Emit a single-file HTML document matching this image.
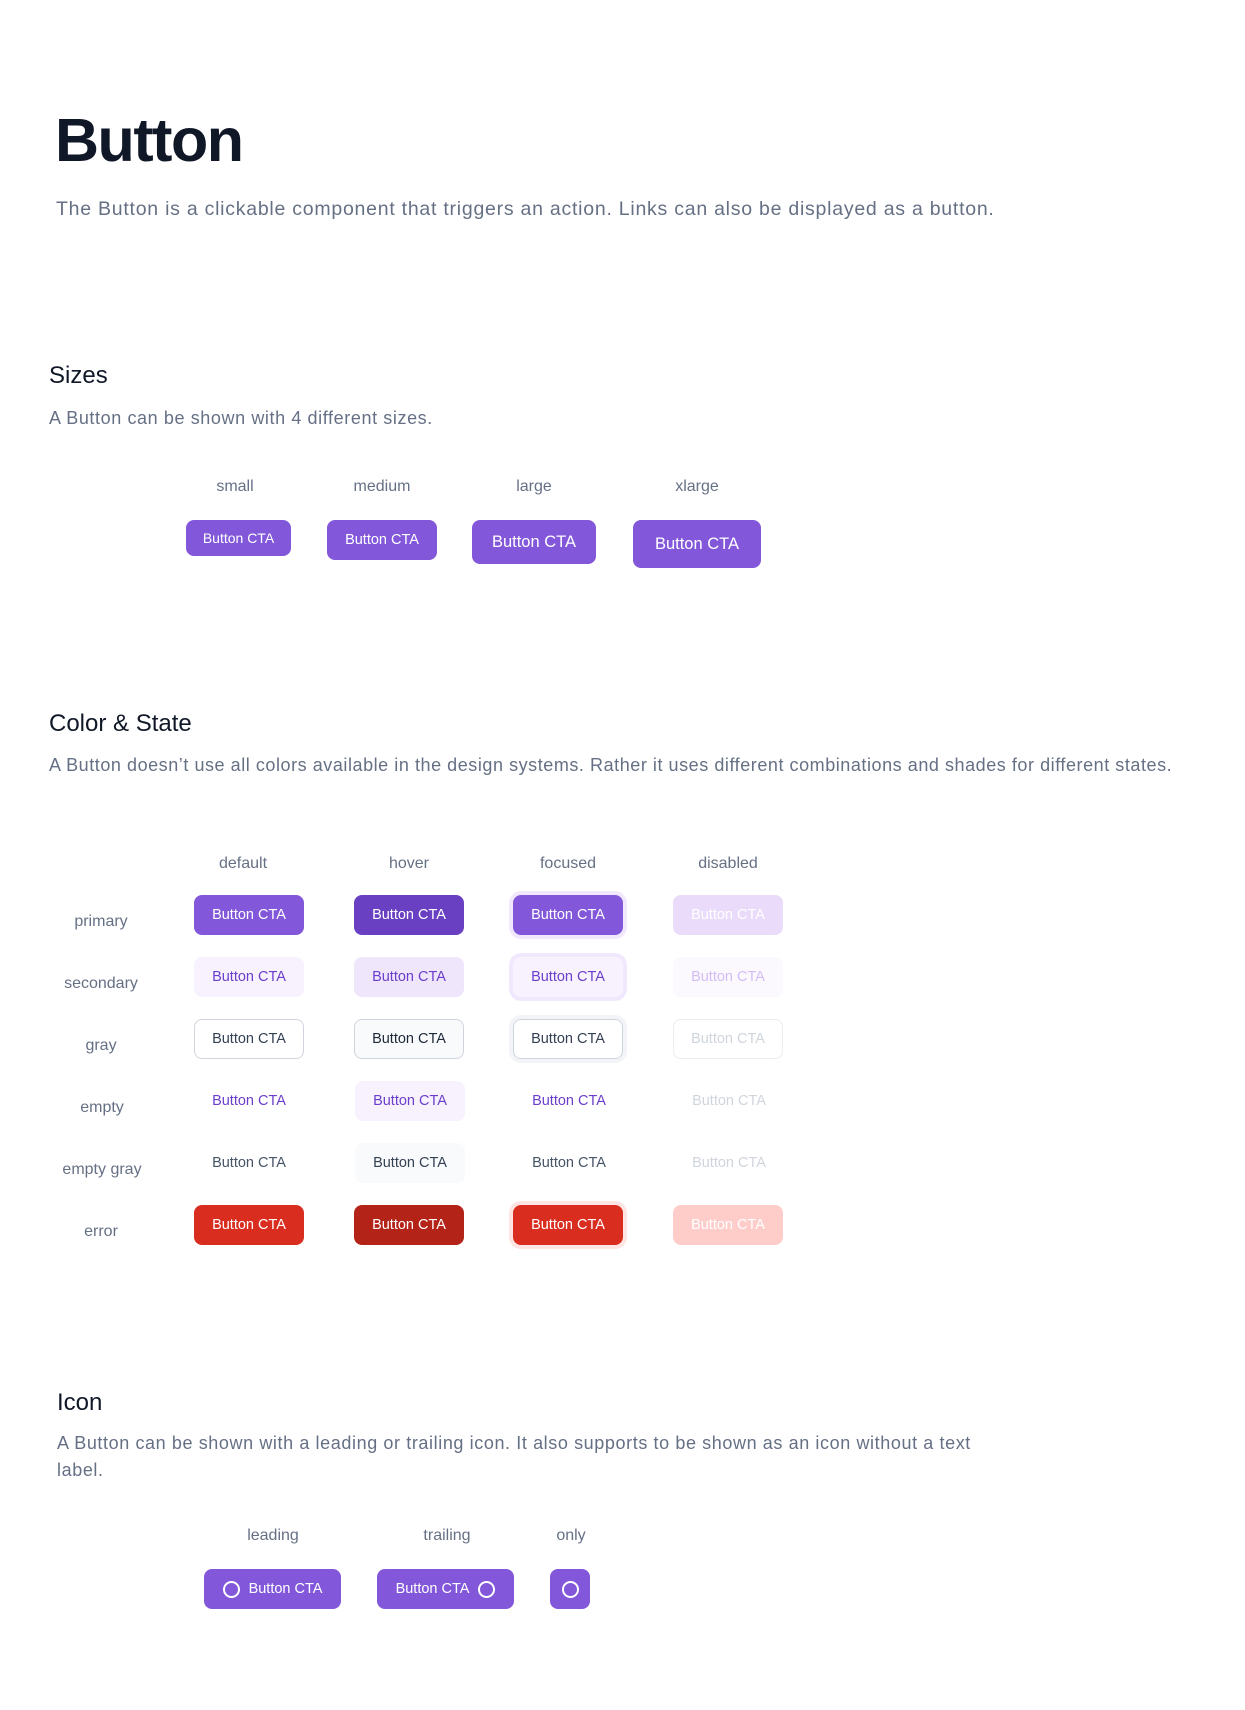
<!DOCTYPE html>
<html><head><meta charset="utf-8"><style>
*{margin:0;padding:0;box-sizing:border-box}
body{width:1245px;height:1710px;background:#fff;font-family:"Liberation Sans",sans-serif;position:relative;overflow:hidden}
.a{position:absolute;white-space:nowrap}
.lbl{color:#667085;font-size:16px;transform:translateX(-50%)}
.b{position:absolute;display:flex;align-items:center;justify-content:center;font-size:14.5px;border-radius:8px;white-space:nowrap;gap:8px}
.p{background:#8257da;color:#fff}
.ph{background:#6a40c3;color:#fff}
.pd{background:#eadbfb;color:#fff}
.s{background:#f7f2fe;color:#6b3fcc}
.sh{background:#f0e6fc;color:#6b3fcc}
.sd{background:#fbf8fe;color:#d4bdf7}
.g{background:#fff;color:#344054;border:1px solid #d0d5dd}
.gh{background:#f9fafb;color:#1d2939;border:1px solid #d0d5dd}
.gd{background:#fff;color:#d0d5dd;border:1px solid #eaecf0}
.e{color:#6b3fcc}
.eh{background:#f7f2fe;color:#6b3fcc}
.ed{color:#d0d5dd}
.eg{color:#475467}
.egh{background:#f9fafb;color:#344054}
.r{background:#d92d20;color:#fff}
.rh{background:#b42318;color:#fff}
.rd{background:#fecdca;color:#fff}
.ic{width:17px;height:17px;border:2px solid #fff;border-radius:50%;display:inline-block}
</style></head><body>
<div class="a" style="left:55px;top:105px;font-size:61px;font-weight:bold;color:#101828;letter-spacing:-1.5px">Button</div>
<div class="a" style="left:56px;top:198px;font-size:19.5px;color:#667085;letter-spacing:0.75px">The Button is a clickable component that triggers an action. Links can also be displayed as a button.</div>

<div class="a" style="left:49px;top:362px;font-size:24px;color:#101828">Sizes</div>
<div class="a" style="left:49px;top:408px;font-size:18px;color:#667085;letter-spacing:0.6px">A Button can be shown with 4 different sizes.</div>
<div class="a lbl" style="left:235px;top:478px">small</div>
<div class="a lbl" style="left:382px;top:478px">medium</div>
<div class="a lbl" style="left:534px;top:478px">large</div>
<div class="a lbl" style="left:697px;top:478px">xlarge</div>
<div class="b p" style="left:186px;top:520px;width:105px;height:36px;font-size:14px">Button CTA</div>
<div class="b p" style="left:327px;top:520px;width:110px;height:40px;font-size:14.5px">Button CTA</div>
<div class="b p" style="left:472px;top:520px;width:124px;height:44px;font-size:16.5px">Button CTA</div>
<div class="b p" style="left:633px;top:520px;width:128px;height:48px;font-size:16.5px">Button CTA</div>

<div class="a" style="left:49px;top:710px;font-size:24px;color:#101828">Color &amp; State</div>
<div class="a" style="left:49px;top:755px;font-size:18px;color:#667085;letter-spacing:0.55px">A Button doesn’t use all colors available in the design systems. Rather it uses different combinations and shades for different states.</div>
<div class="a lbl" style="left:243px;top:855px">default</div>
<div class="a lbl" style="left:409px;top:855px">hover</div>
<div class="a lbl" style="left:568px;top:855px">focused</div>
<div class="a lbl" style="left:728px;top:855px">disabled</div>

<div class="a lbl" style="left:101px;top:913px">primary</div>
<div class="a lbl" style="left:101px;top:975px">secondary</div>
<div class="a lbl" style="left:101px;top:1037px">gray</div>
<div class="a lbl" style="left:102px;top:1099px">empty</div>
<div class="a lbl" style="left:102px;top:1161px">empty gray</div>
<div class="a lbl" style="left:101px;top:1223px">error</div>

<div class="b p" style="left:194px;top:895px;width:110px;height:40px">Button CTA</div>
<div class="b ph" style="left:354px;top:895px;width:110px;height:40px">Button CTA</div>
<div class="b p" style="left:513px;top:895px;width:110px;height:40px;box-shadow:0 0 0 4px #f1e8fd">Button CTA</div>
<div class="b pd" style="left:673px;top:895px;width:110px;height:40px">Button CTA</div>

<div class="b s" style="left:194px;top:957px;width:110px;height:40px">Button CTA</div>
<div class="b sh" style="left:354px;top:957px;width:110px;height:40px">Button CTA</div>
<div class="b s" style="left:513px;top:957px;width:110px;height:40px;box-shadow:0 0 0 4px #f1e8fd">Button CTA</div>
<div class="b sd" style="left:673px;top:957px;width:110px;height:40px">Button CTA</div>

<div class="b g" style="left:194px;top:1019px;width:110px;height:40px">Button CTA</div>
<div class="b gh" style="left:354px;top:1019px;width:110px;height:40px">Button CTA</div>
<div class="b g" style="left:513px;top:1019px;width:110px;height:40px;box-shadow:0 0 0 4px #f2f4f7">Button CTA</div>
<div class="b gd" style="left:673px;top:1019px;width:110px;height:40px">Button CTA</div>

<div class="b e" style="left:194px;top:1081px;width:110px;height:40px">Button CTA</div>
<div class="b eh" style="left:355px;top:1081px;width:110px;height:40px">Button CTA</div>
<div class="b e" style="left:514px;top:1081px;width:110px;height:40px">Button CTA</div>
<div class="b ed" style="left:674px;top:1081px;width:110px;height:40px">Button CTA</div>

<div class="b eg" style="left:194px;top:1143px;width:110px;height:40px">Button CTA</div>
<div class="b egh" style="left:355px;top:1143px;width:110px;height:40px">Button CTA</div>
<div class="b eg" style="left:514px;top:1143px;width:110px;height:40px">Button CTA</div>
<div class="b ed" style="left:674px;top:1143px;width:110px;height:40px">Button CTA</div>

<div class="b r" style="left:194px;top:1205px;width:110px;height:40px">Button CTA</div>
<div class="b rh" style="left:354px;top:1205px;width:110px;height:40px">Button CTA</div>
<div class="b r" style="left:513px;top:1205px;width:110px;height:40px;box-shadow:0 0 0 4px #fee4e2">Button CTA</div>
<div class="b rd" style="left:673px;top:1205px;width:110px;height:40px">Button CTA</div>

<div class="a" style="left:57px;top:1389px;font-size:24px;color:#101828">Icon</div>
<div class="a" style="left:57px;top:1430px;font-size:18px;color:#667085;line-height:27px;white-space:normal;width:930px;letter-spacing:0.6px">A Button can be shown with a leading or trailing icon. It also supports to be shown as an icon without a text label.</div>
<div class="a lbl" style="left:273px;top:1527px">leading</div>
<div class="a lbl" style="left:447px;top:1527px">trailing</div>
<div class="a lbl" style="left:571px;top:1527px">only</div>
<div class="b p" style="left:204px;top:1569px;width:137px;height:40px;gap:9px"><span class="ic"></span>Button CTA</div>
<div class="b p" style="left:377px;top:1569px;width:137px;height:40px;gap:9px">Button CTA<span class="ic"></span></div>
<div class="b p" style="left:550px;top:1569px;width:40px;height:40px"><span class="ic"></span></div>
</body></html>
